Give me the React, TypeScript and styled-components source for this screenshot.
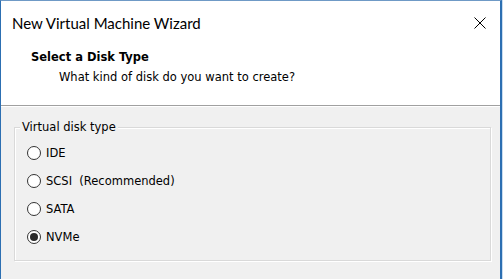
import React from 'react';
import styled, { createGlobalStyle } from 'styled-components';

const GlobalStyle = createGlobalStyle`
  html, body {
    margin: 0;
    padding: 0;
    background: #c9dcef;
  }
`;

const dialogFont = `'DejaVu Sans', 'Verdana', sans-serif`;

const Screen = styled.div`
  width: 503px;
  height: 279px;
  overflow: hidden;
  display: flex;
`;

const Window = styled.div`
  width: 502px;
  flex: none;
  box-sizing: border-box;
  border-top: 1px solid #6f9ac6;
  border-left: 1px solid #2c6fb2;
  border-right: 2px solid #2c6fb2;
  display: flex;
  flex-direction: column;
  background: #f0f0f0;
`;

const Header = styled.div`
  background: #ffffff;
  border-bottom: 1px solid #a0a0a0;
  padding-bottom: 20px;
`;

const TitleBar = styled.div`
  height: 44px;
  display: flex;
  align-items: center;
  justify-content: space-between;
  padding: 0 14px 0 11px;
`;

const Title = styled.div`
  font-family: 'Lato', 'Noto Sans', sans-serif;
  font-size: 15px;
  color: #000;
`;

const CloseButton = styled.div`
  width: 12px;
  height: 12px;
  display: flex;
`;

const Heading = styled.div`
  font-family: ${dialogFont};
  font-weight: bold;
  font-size: 11.5px;
  line-height: 16px;
  padding: 4px 0 0 30px;
  color: #000;
`;

const SubHeading = styled.div`
  font-family: ${dialogFont};
  font-size: 11.5px;
  line-height: 16px;
  margin-top: 4px;
  padding-left: 58px;
  color: #000;
`;

const Body = styled.div`
  flex: 1;
  border-top: 1px solid #ffffff;
  padding: 20px 9px 0 13px;
`;

const GroupBox = styled.div`
  display: flex;
  flex-direction: column;
  align-items: flex-start;
  border: 1px solid #d9d9d9;
  box-shadow: inset 1px 1px 0 #ffffff, 1px 1px 0 #ffffff;
`;

const GroupTitle = styled.div`
  font-family: ${dialogFont};
  font-size: 11.5px;
  line-height: 14px;
  margin: -8px 0 0 5px;
  padding: 0 2px;
  background: #f0f0f0;
  color: #000;
`;

const OptionList = styled.div`
  display: flex;
  flex-direction: column;
  padding: 5px 0 9px 12px;
`;

const RadioRow = styled.label`
  display: flex;
  align-items: center;
  height: 28px;
  font-family: ${dialogFont};
  font-size: 11.5px;
  color: #000;
  white-space: pre;
`;

const RadioCircle = styled.span<{ $checked?: boolean }>`
  width: 14px;
  height: 14px;
  box-sizing: border-box;
  border: 1px solid #333333;
  border-radius: 50%;
  background: #ffffff;
  margin-right: 5px;
  display: flex;
  align-items: center;
  justify-content: center;
  &::after {
    content: '';
    display: ${(p) => (p.$checked ? 'block' : 'none')};
    width: 8px;
    height: 8px;
    border-radius: 50%;
    background: #2a2a2a;
  }
`;

const options = [
  { label: 'IDE', checked: false },
  { label: 'SCSI  (Recommended)', checked: false },
  { label: 'SATA', checked: false },
  { label: 'NVMe', checked: true },
];

export default function App() {
  return (
    <>
      <GlobalStyle />
      <Screen>
        <Window>
          <Header>
            <TitleBar>
              <Title>New Virtual Machine Wizard</Title>
              <CloseButton>
                <svg width="12" height="12" viewBox="0 0 12 12">
                  <path d="M0.5 0.5 L11.5 11.5 M11.5 0.5 L0.5 11.5" stroke="#000" strokeWidth="1" fill="none" />
                </svg>
              </CloseButton>
            </TitleBar>
            <Heading>Select a Disk Type</Heading>
            <SubHeading>What kind of disk do you want to create?</SubHeading>
          </Header>
          <Body>
            <GroupBox>
              <GroupTitle>Virtual disk type</GroupTitle>
              <OptionList>
                {options.map((o) => (
                  <RadioRow key={o.label}>
                    <RadioCircle $checked={o.checked} />
                    {o.label}
                  </RadioRow>
                ))}
              </OptionList>
            </GroupBox>
          </Body>
        </Window>
      </Screen>
    </>
  );
}
